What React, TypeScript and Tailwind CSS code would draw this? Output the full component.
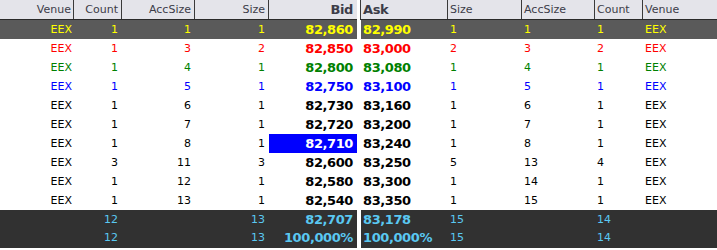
import React from 'react';

type Level = { venue: string; count: number; acc: number; size: number; price: string };

const bids: Level[] = [
  { venue: 'EEX', count: 1, acc: 1, size: 1, price: '82,860' },
  { venue: 'EEX', count: 1, acc: 3, size: 2, price: '82,850' },
  { venue: 'EEX', count: 1, acc: 4, size: 1, price: '82,800' },
  { venue: 'EEX', count: 1, acc: 5, size: 1, price: '82,750' },
  { venue: 'EEX', count: 1, acc: 6, size: 1, price: '82,730' },
  { venue: 'EEX', count: 1, acc: 7, size: 1, price: '82,720' },
  { venue: 'EEX', count: 1, acc: 8, size: 1, price: '82,710' },
  { venue: 'EEX', count: 3, acc: 11, size: 3, price: '82,600' },
  { venue: 'EEX', count: 1, acc: 12, size: 1, price: '82,580' },
  { venue: 'EEX', count: 1, acc: 13, size: 1, price: '82,540' },
];

const asks: Level[] = [
  { venue: 'EEX', count: 1, acc: 1, size: 1, price: '82,990' },
  { venue: 'EEX', count: 2, acc: 3, size: 2, price: '83,000' },
  { venue: 'EEX', count: 1, acc: 4, size: 1, price: '83,080' },
  { venue: 'EEX', count: 1, acc: 5, size: 1, price: '83,100' },
  { venue: 'EEX', count: 1, acc: 6, size: 1, price: '83,160' },
  { venue: 'EEX', count: 1, acc: 7, size: 1, price: '83,200' },
  { venue: 'EEX', count: 1, acc: 8, size: 1, price: '83,240' },
  { venue: 'EEX', count: 4, acc: 13, size: 5, price: '83,250' },
  { venue: 'EEX', count: 1, acc: 14, size: 1, price: '83,300' },
  { venue: 'EEX', count: 1, acc: 15, size: 1, price: '83,350' },
];

// row colouring by depth level
const rowStyle = (i: number) => {
  if (i === 0) return 'bg-[#5a5a5a] text-[#ffff00]';
  if (i === 1) return 'text-[#ff0000]';
  if (i === 2) return 'text-[#008000]';
  if (i === 3) return 'text-[#0000ff]';
  return 'text-black';
};

const hdr = 'h-[19px] leading-[19px] border-[#3a3a3a] text-[#3c3c48]';
const price = 'font-bold text-[13px] tracking-[-0.4px]';

function BidSide() {
  return (
    <div className="w-[357px] shrink-0">
      <div className="flex bg-[#e4e4ea] border-b border-[#2a2a2a] text-right">
        <div className={`w-[74px] pr-[2px] border-r ${hdr}`}>Venue</div>
        <div className={`w-[48px] pr-[3px] border-r ${hdr}`}>Count</div>
        <div className={`w-[73px] pr-[3px] border-r ${hdr}`}>AccSize</div>
        <div className={`w-[74px] pr-[3px] border-r ${hdr}`}>Size</div>
        <div className={`w-[88px] pr-[4px] ${hdr} ${price} text-[#2a2a34]`}>Bid</div>
      </div>
      {bids.map((b, i) => (
        <div key={i} className={`flex h-[19px] leading-[19px] text-right ${rowStyle(i)}`}>
          <div className="w-[74px] pr-[2px]">{b.venue}</div>
          <div className="w-[48px] pr-[4px]">{b.count}</div>
          <div className="w-[73px] pr-[4px]">{b.acc}</div>
          <div className="w-[74px] pr-[4px]">{b.size}</div>
          <div className={`w-[88px] pr-[4px] ${price} ${i === 6 ? 'bg-[#0000ff] text-white' : ''}`}>{b.price}</div>
        </div>
      ))}
      <div className="bg-[#313131] text-[#5ac8f2] text-right pb-px">
        <div className="flex h-[19px] leading-[19px]">
          <div className="w-[74px]" />
          <div className="w-[48px] pr-[4px]">12</div>
          <div className="w-[73px]" />
          <div className="w-[74px] pr-[4px]">13</div>
          <div className={`w-[88px] pr-[4px] ${price}`}>82,707</div>
        </div>
        <div className="flex h-[18px] leading-[18px]">
          <div className="w-[74px]" />
          <div className="w-[48px] pr-[4px]">12</div>
          <div className="w-[73px]" />
          <div className="w-[74px] pr-[4px]">13</div>
          <div className={`w-[88px] pr-[4px] ${price}`}>100,000%</div>
        </div>
      </div>
    </div>
  );
}

function AskSide() {
  return (
    <div className="w-[357px] shrink-0">
      <div className="flex bg-[#e4e4ea] border-b border-[#2a2a2a]">
        <div className={`w-[87px] pl-[2px] border-l ${hdr} ${price} text-[#2a2a34]`}>Ask</div>
        <div className={`w-[74px] pl-[2px] border-l ${hdr}`}>Size</div>
        <div className={`w-[73px] pl-[2px] border-l ${hdr}`}>AccSize</div>
        <div className={`w-[48px] pl-[2px] border-l ${hdr}`}>Count</div>
        <div className={`w-[75px] pl-[2px] border-l ${hdr}`}>Venue</div>
      </div>
      {asks.map((a, i) => (
        <div key={i} className="flex h-[19px] leading-[19px] pl-px">
          <div className={`flex flex-1 ${rowStyle(i)}`}>
            <div className={`w-[86px] pl-[2px] ${price}`}>{a.price}</div>
            <div className="w-[74px] pl-[3px]">{a.size}</div>
            <div className="w-[73px] pl-[3px]">{a.acc}</div>
            <div className="w-[48px] pl-[3px]">{a.count}</div>
            <div className="w-[75px] pl-[3px]">{a.venue}</div>
          </div>
        </div>
      ))}
      <div className="pl-px">
        <div className="bg-[#313131] text-[#5ac8f2] pb-px">
          <div className="flex h-[19px] leading-[19px]">
            <div className={`w-[86px] pl-[2px] ${price}`}>83,178</div>
            <div className="w-[74px] pl-[3px]">15</div>
            <div className="w-[73px]" />
            <div className="w-[48px] pl-[3px]">14</div>
            <div className="w-[75px]" />
          </div>
          <div className="flex h-[18px] leading-[18px]">
            <div className={`w-[86px] pl-[2px] ${price}`}>100,000%</div>
            <div className="w-[74px] pl-[3px]">15</div>
            <div className="w-[73px]" />
            <div className="w-[48px] pl-[3px]">14</div>
            <div className="w-[75px]" />
          </div>
        </div>
      </div>
    </div>
  );
}

export default function App() {
  return (
    <div className="w-[717px] h-[250px] overflow-hidden bg-white font-['DejaVu_Sans',sans-serif] text-[11px] flex">
      <BidSide />
      <div className="w-[3px] shrink-0" />
      <AskSide />
    </div>
  );
}
